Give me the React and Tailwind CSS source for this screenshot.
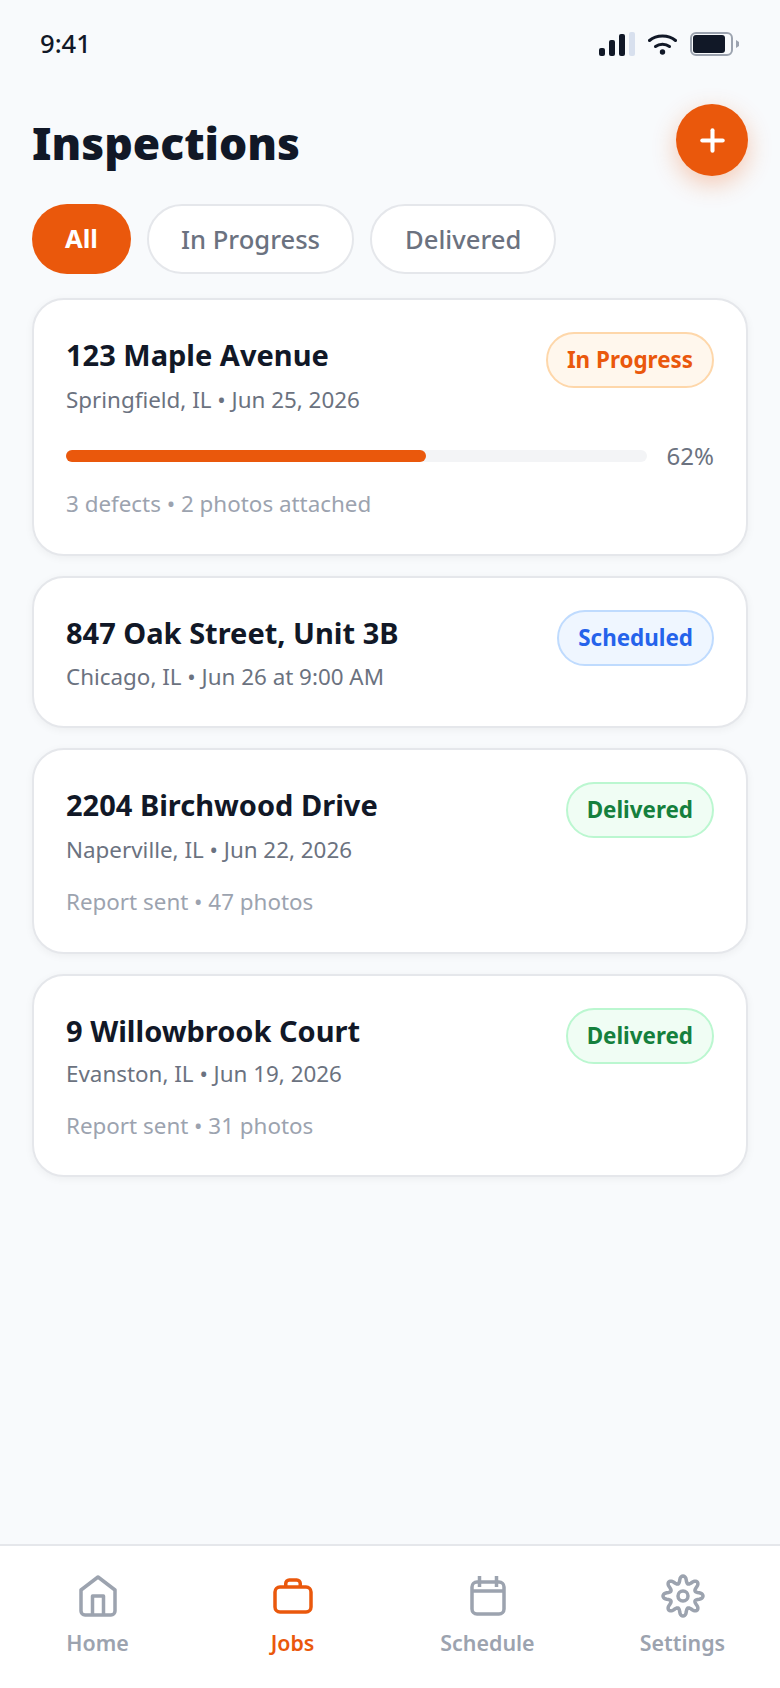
import { Plus } from "lucide-react";

const cards = [
  { title: "123 Maple Avenue", sub: "Springfield, IL • Jun 25, 2026", status: "In Progress", progress: 62, note: "3 defects • 2 photos attached", subGap: "mt-[6px]", pad: "pb-[33px]" },
  { title: "847 Oak Street, Unit 3B", sub: "Chicago, IL • Jun 26 at 9:00 AM", status: "Scheduled", subGap: "mt-[5px]", pad: "pb-[32px]" },
  { title: "2204 Birchwood Drive", sub: "Naperville, IL • Jun 22, 2026", status: "Delivered", note: "Report sent • 47 photos", subGap: "mt-[6px]", pad: "pb-[33px]" },
  { title: "9 Willowbrook Court", sub: "Evanston, IL • Jun 19, 2026", status: "Delivered", note: "Report sent • 31 photos", subGap: "mt-[4px]", pad: "pb-[32px]" },
];

const badgeStyles = {
  "In Progress": "bg-[#fff7ed] border-[#fed7aa] text-[#ea580c]",
  Scheduled: "bg-[#eff6ff] border-[#bfdbfe] text-[#2563eb]",
  Delivered: "bg-[#f0fdf4] border-[#bbf7d0] text-[#15803d]",
};

const Badge = ({ status }) => (
  <span className={`h-[56px] px-[19px] pb-[1px] flex items-center rounded-full border-2 text-[22.4px] font-bold ${badgeStyles[status]}`}>
    {status}
  </span>
);

const Card = ({ card }) => (
  <div className={`bg-white rounded-[32px] border-2 border-[#e5e7eb] shadow-[0_2px_8px_rgba(0,0,0,0.05)] px-[32px] pt-[32px] ${card.pad}`}>
    <div className="flex justify-between items-start">
      <div>
        <div className="text-[29px] font-bold text-[#111827] leading-[45px]">{card.title}</div>
        <div className={`text-[22.4px] text-[#6b7280] leading-[34px] ${card.subGap}`}>{card.sub}</div>
      </div>
      <Badge status={card.status} />
    </div>
    {card.progress && (
      <div className="flex items-center gap-[20px] mt-[22px] h-[34px]">
        <div className="flex-1 h-[12px] rounded-full bg-[#f3f4f6]">
          <div className="h-full rounded-full bg-[#ea580c]" style={{ width: `${card.progress}%` }} />
        </div>
        <span className="text-[24px] text-[#6b7280]">{card.progress}%</span>
      </div>
    )}
    {card.note && <div className={`text-[22.4px] text-[#9ca3af] leading-[34px] ${card.progress ? "mt-[14px]" : "mt-[18px]"}`}>{card.note}</div>}
  </div>
);

const HomeIcon = () => (
  <svg width="38" height="42" viewBox="0 0 38 42" fill="none" stroke="currentColor" strokeWidth="3.5" strokeLinejoin="round">
    <path d="M2 15 19 2l17 13v21a4 4 0 0 1-4 4H6a4 4 0 0 1-4-4z" />
    <path d="M13.5 40V21h11v19" />
  </svg>
);

const JobsIcon = () => (
  <svg width="40" height="38" viewBox="0 0 40 38" fill="none" stroke="currentColor" strokeWidth="3.5" strokeLinejoin="round">
    <rect x="2" y="10" width="36" height="25" rx="5" />
    <path d="M12.75 10V6.5a3.5 3.5 0 0 1 3.5-3.5h7.5a3.5 3.5 0 0 1 3.5 3.5V10" />
  </svg>
);

const CalendarIcon = () => (
  <svg width="36" height="40" viewBox="0 0 36 40" fill="none" stroke="currentColor" strokeWidth="3.5" strokeLinejoin="round">
    <rect x="2" y="6" width="32" height="32" rx="5" />
    <path d="M2 15h32M9.5 0v11M26.5 0v11" />
  </svg>
);

// 8 rounded teeth, the package gears have a different count
const gearPath = Array.from({ length: 160 }, (_, i) => {
  const a = (i / 160) * Math.PI * 2;
  const c = Math.cos(8 * a);
  const r = 16.5 + 3.5 * Math.sign(c) * Math.pow(Math.abs(c), 0.7);
  return `${i ? "L" : "M"}${(22 + r * Math.sin(a)).toFixed(2)} ${(22 - r * Math.cos(a)).toFixed(2)}`;
}).join("") + "Z";

const GearIcon = () => (
  <svg width="44" height="44" viewBox="0 0 44 44" fill="none" stroke="currentColor" strokeWidth="3.5" strokeLinejoin="round">
    <path d={gearPath} />
    <circle cx="22" cy="22" r="5" />
  </svg>
);

const tabs = [
  { label: "Home", Icon: HomeIcon },
  { label: "Jobs", Icon: JobsIcon, active: true },
  { label: "Schedule", Icon: CalendarIcon },
  { label: "Settings", Icon: GearIcon },
];

const StatusBar = () => (
  <div className="h-[88px] flex items-center justify-between px-[40px] text-[#111827]">
    <span className="text-[25.6px] font-medium">9:41</span>
    <div className="flex items-center gap-[13px]">
      <svg width="36" height="24" viewBox="0 0 36 24">
        <rect x="0" y="16" width="6" height="8" rx="2" fill="#111827" />
        <rect x="10" y="8" width="6" height="16" rx="2" fill="#111827" />
        <rect x="20" y="2" width="6" height="22" rx="2" fill="#111827" />
        <rect x="30" y="0" width="6" height="24" rx="2" fill="#d8e0ee" />
      </svg>
      <svg width="29" height="22" viewBox="0 0 29 22" fill="none" stroke="#111827" strokeWidth="3" strokeLinecap="round">
        <path d="M1.5 7.5c7-6 19-6 26 0" />
        <path d="M7.5 13.5c4-3 10-3 14 0" />
        <circle cx="14.5" cy="19" r="2.7" fill="#111827" stroke="none" />
      </svg>
      <svg width="50" height="24" viewBox="0 0 50 24">
        <rect x="1" y="1" width="41" height="22" rx="5" fill="none" stroke="#9ca3af" strokeWidth="2" />
        <rect x="3" y="3" width="32" height="18" rx="3" fill="#111827" />
        <path d="M46 8l3 2v4l-3 2z" fill="#9ca3af" />
      </svg>
    </div>
  </div>
);

export default function App() {
  return (
    <div className="h-[1688px] flex flex-col bg-[#f8fafc] font-['Noto_Sans',sans-serif]">
      <StatusBar />
      <div className="flex-1 px-[32px]">
        <div className="flex items-center justify-between mt-[16px] h-[72px]">
          <h1 className="text-[44.4px] font-black text-[#111827] leading-[56px] mt-[6px]">Inspections</h1>
          <button className="w-[72px] h-[72px] rounded-full bg-[#ea580c] text-white flex items-center justify-center shadow-[0_8px_24px_rgba(234,88,12,0.3)]">
            <Plus size={35} strokeWidth={2.8} />
          </button>
        </div>
        <div className="flex gap-[16px] mt-[28px]">
          <span className="h-[70px] px-[33px] flex items-center rounded-full bg-[#ea580c] text-white text-[25.6px] font-bold">All</span>
          <span className="h-[70px] px-[32px] pt-[2px] flex items-center rounded-full bg-white border-2 border-[#e5e7eb] text-[#6b7280] text-[25.6px] font-medium">In Progress</span>
          <span className="h-[70px] px-[33px] pt-[2px] flex items-center rounded-full bg-white border-2 border-[#e5e7eb] text-[#6b7280] text-[25.6px] font-medium">Delivered</span>
        </div>
        <div className="flex flex-col gap-[20px] mt-[24px]">
          {cards.map((card) => (
            <Card key={card.title} card={card} />
          ))}
        </div>
      </div>
      <div className="h-[144px] bg-white border-t-2 border-[#e5e7eb] flex pt-[28px]">
        {tabs.map(({ label, Icon, active }) => (
          <div key={label} className={`flex-1 flex flex-col items-center gap-[9px] ${active ? "text-[#ea580c]" : "text-[#9ca3af]"}`}>
            <div className="h-[44px] flex items-center"><Icon /></div>
            <span className="text-[21.4px] font-semibold">{label}</span>
          </div>
        ))}
      </div>
    </div>
  );
}
